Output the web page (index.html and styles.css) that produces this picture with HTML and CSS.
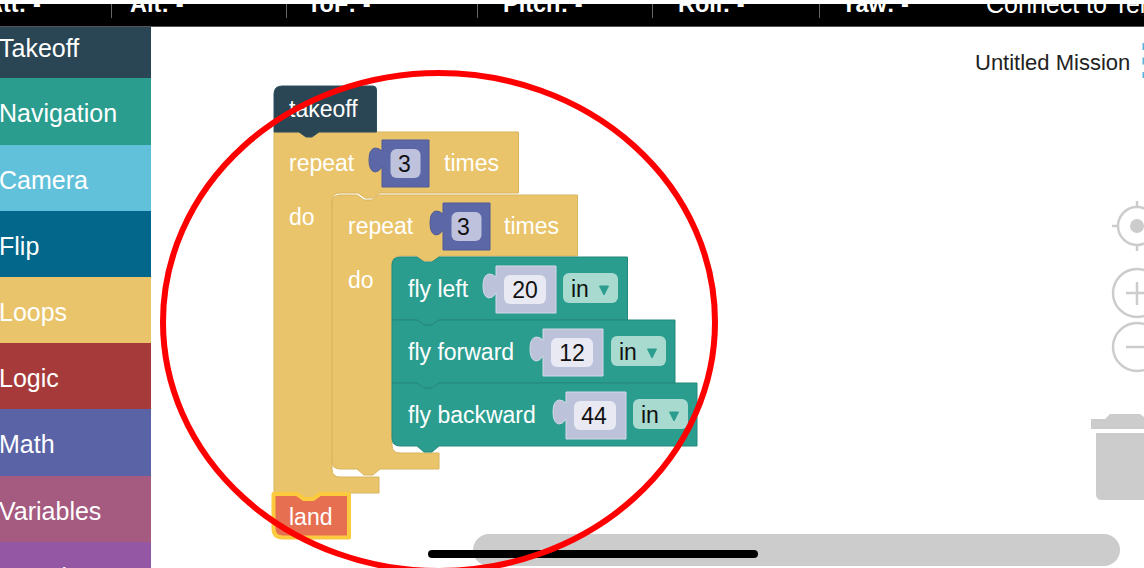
FILE: index.html
```html
<!DOCTYPE html>
<html>
  <head lang="en">
    <meta charset="UTF-8" />
    <title>Untitled Mission</title>
    <link rel="stylesheet" href="styles.css">
  </head>

  <body>
    <div class="topbar">
      <div class="stat stat-att">Att: -</div>
      <div class="stat stat-alt">Alt: -</div>
      <div class="stat stat-tof">ToF: -</div>
      <div class="stat stat-pitch">Pitch: -</div>
      <div class="stat stat-roll">Roll: -</div>
      <div class="stat stat-yaw">Yaw: -</div>
      <div class="connect">Connect to Tello</div>
    </div>

    <div class="main">
      <ul class="toolbox">
        <li class="cat cat-takeoff">Takeoff</li>
        <li class="cat cat-nav">Navigation</li>
        <li class="cat cat-camera">Camera</li>
        <li class="cat cat-flip">Flip</li>
        <li class="cat cat-loops">Loops</li>
        <li class="cat cat-logic">Logic</li>
        <li class="cat cat-math">Math</li>
        <li class="cat cat-vars">Variables</li>
        <li class="cat cat-funcs">Functions</li>
      </ul>

      <div class="workspace">
        <!-- viewBox is in page coordinates -->
        <svg class="canvas" viewBox="151 27 993 541" width="993" height="541">
          <defs>
            <path id="num-sm" d="M0 0h47v47h-47v-20q-3 5 -7 5q-6 -1 -6 -12q0 -11 6 -12q4 0 7 3z" />
            <path id="num-lg" d="M0 0h60v47h-60v-20q-3 5 -7 5q-6 -1 -6 -12q0 -11 6 -12q4 0 7 3z" />
            <g id="unit">
              <rect class="dropdown" width="55" height="30" rx="6" />
              <text class="block-text dark" x="8" y="24">in</text>
              <path class="arrow" d="M36.500 13h9l-4.500 9z" />
            </g>
          </defs>

          <!-- outer repeat -->
          <path class="block loops" d="M274 132H518.500V193H380l-7 5h-8l-7 -5H340Q332 193 332 201V469Q332 477 340 477H379V493H320l-7 5h-9l-7 -5H274Z" />
          <text class="block-text" x="289" y="171">repeat</text>
          <text class="block-text" x="444" y="171">times</text>
          <text class="block-text" x="289" y="225">do</text>
          <g transform="translate(382 140)">
            <use href="#num-sm" class="num-blue" />
            <rect class="field-blue" x="8.500" y="9" width="30" height="29" rx="6" />
            <text class="block-text dark mid" x="22.500" y="32">3</text>
          </g>

          <!-- takeoff -->
          <path class="block takeoff" d="M274 132V94Q274 86 282 86H373Q376.500 86 376.500 90V132H319l-7 5h-6l-7 -5Z" />
          <text class="block-text" x="289" y="117">takeoff</text>

          <!-- inner repeat -->
          <path class="block loops" d="M332 203Q332 195 340 195H357l7 5h8l7 -5H577.500V256H440l-7 5h-9l-7 -5H400Q392 256 392 264V445Q392 453 400 453H439V469H380l-7 6h-9l-7 -6H340Q332 469 332 461Z" />
          <text class="block-text" x="348" y="234">repeat</text>
          <text class="block-text" x="504" y="234">times</text>
          <text class="block-text" x="348" y="288">do</text>
          <g transform="translate(443 203)">
            <use href="#num-sm" class="num-blue" />
            <rect class="field-blue" x="8.500" y="9" width="30" height="29" rx="6" />
            <text class="block-text dark mid" x="20.500" y="32">3</text>
          </g>

          <!-- fly blocks -->
          <path class="block nav" d="M392 265Q392 257 400 257H417l7 5h8l7 -5H627.500V320H439l-7 5h-8l-7 -5H392Z" />
          <text class="block-text" x="408" y="297">fly left</text>
          <g transform="translate(496 266)">
            <use href="#num-lg" class="num-light" />
            <rect class="field-light" x="8" y="9" width="42" height="29" rx="6" />
            <text class="block-text dark mid" x="29" y="32">20</text>
          </g>
          <use href="#unit" x="563" y="273" />

          <path class="block nav" d="M392 320H417l7 5h8l7 -5H675V383H439l-7 5h-8l-7 -5H392Z" />
          <text class="block-text" x="408" y="360">fly forward</text>
          <g transform="translate(543 329)">
            <use href="#num-lg" class="num-light" />
            <rect class="field-light" x="8" y="9" width="42" height="29" rx="6" />
            <text class="block-text dark mid" x="29" y="32">12</text>
          </g>
          <use href="#unit" x="611" y="336" />

          <path class="block nav" d="M392 383H417l7 5h8l7 -5H697V446H439l-7 6h-8l-7 -6H400Q392 446 392 438Z" />
          <text class="block-text" x="408" y="423">fly backward</text>
          <g transform="translate(566 392)">
            <use href="#num-lg" class="num-light" />
            <rect class="field-light" x="8" y="9" width="42" height="29" rx="6" />
            <text class="block-text dark mid" x="28" y="32">44</text>
          </g>
          <use href="#unit" x="633" y="399" />

          <!-- land, selected -->
          <path class="land" d="M273.500 494H297l7 5h9l7 -5H349V537.500H283Q273.500 537.500 273.500 528Z" />
          <text class="block-text" x="289" y="525">land</text>

          <!-- title -->
          <text class="mission" x="975" y="70">Untitled Mission</text>
          <line class="title-edge" x1="1143.500" y1="43" x2="1143.500" y2="78" />

          <!-- controls -->
          <g class="ctl">
            <circle cx="1137" cy="226" r="19" />
            <path d="M1112 226h6M1137 201v6M1137 245v6" />
            <circle class="ctl-fill" cx="1137" cy="226" r="7" />
            <circle cx="1137" cy="293" r="24" />
            <path d="M1126 293h22M1137 282v23" />
            <circle cx="1137" cy="347" r="24" />
            <path d="M1126 347h22" />
          </g>
          <path class="ctl-fill" d="M1091 419H1105L1110 414H1140L1144 417V429H1091Z" />
          <path class="ctl-fill" d="M1096 433H1144V500H1102Q1096 500 1096 494Z" />

          <rect class="ctl-fill" x="473" y="534" width="647" height="32" rx="16" />
        </svg>
      </div>
    </div>

    <div class="home-bar"></div>

    <svg class="annotation" viewBox="0 0 1144 568" width="1144" height="568">
      <ellipse cx="439" cy="322" rx="276" ry="249" />
    </svg>
  </body>
</html>
```

FILE: styles.css
```css
html,
body,
ul,
li {
  margin: 0;
  padding: 0;
}

ul {
  list-style-type: none;
}

html,
body {
  height: 100%;
  overflow: hidden;
}

body {
  position: relative;
  display: flex;
  flex-direction: column;
  padding-top: 4px;
  box-sizing: border-box;
  background: #fff;
  font-family: "Liberation Sans", Arial, sans-serif;
}

.topbar {
  display: flex;
  flex: none;
  align-items: flex-start;
  height: 23px;
  box-sizing: border-box;
  overflow: hidden;
  background: #000;
  border-bottom: 1px solid #555;
  color: #fff;
  font-size: 23.500px;
  line-height: 0;
}

.stat {
  flex: none;
  box-sizing: border-box;
  height: 14px;
  border-right: 1px solid #666;
  font-weight: 700;
  white-space: nowrap;
}

.stat-att {
  width: 126px;
  margin-left: -14px;
}
.stat-alt {
  width: 175px;
  padding-left: 18px;
}
.stat-tof {
  width: 191px;
  padding-left: 20px;
}
.stat-pitch {
  width: 175px;
  padding-left: 25px;
}
.stat-roll {
  width: 167px;
  padding-left: 25px;
}
.stat-yaw {
  width: 166px;
  padding-left: 21px;
  border-right: 0;
}

.connect {
  flex: none;
  font-size: 25px;
  white-space: nowrap;
}

.main {
  display: flex;
  flex: 1;
  min-height: 0;
  overflow: hidden;
}

.toolbox {
  flex: none;
  width: 151px;
  color: #fff;
  font-size: 25px;
  text-indent: -1px;
}

.cat {
  display: flex;
  align-items: center;
  height: 66.200px;
  box-sizing: border-box;
  padding-top: 5px;
}

.cat-takeoff {
  height: 51.400px;
  padding-top: 0;
  padding-bottom: 9px;
  background: #2a4655;
}
.cat-nav {
  background: #2a9d8f;
}
.cat-camera {
  background: #62c1da;
}
.cat-flip {
  background: #03678c;
}
.cat-loops {
  background: #e9c46a;
}
.cat-logic {
  background: #a63a3a;
}
.cat-math {
  background: #5a63a6;
}
.cat-vars {
  background: #a55a80;
}
.cat-funcs {
  background: #9457a3;
}

.workspace {
  flex: 1;
  min-width: 0;
}

.canvas {
  display: block;
}

.block {
  stroke-width: 1;
}
.loops {
  fill: #e9c46a;
  stroke: #d8b45c;
}
.takeoff {
  fill: #2a4655;
  stroke: #2f4f5e;
}
.nav {
  fill: #2a9d8f;
  stroke: #25897d;
}

.block-text {
  fill: #fff;
  font-size: 23px;
}
.dark {
  fill: #111;
}
.mid {
  text-anchor: middle;
}

.num-blue {
  fill: #5b67a6;
  stroke: #4f5b98;
}
.field-blue {
  fill: #bec2dd;
}
.num-light {
  fill: #bcc2d9;
  stroke: #d6d9e8;
}
.field-light {
  fill: #e8e9f3;
}

.dropdown {
  fill: #a8dad0;
}
.arrow {
  fill: #2a9d8f;
  stroke: #2a9d8f;
  stroke-linejoin: round;
}

.land {
  fill: #e76f51;
  stroke: #fcca3f;
  stroke-width: 4;
  stroke-linejoin: round;
}

.mission {
  fill: #222;
  font-size: 22px;
}
.title-edge {
  stroke: #5bb0dc;
  stroke-width: 2;
  stroke-dasharray: 7 7.500;
}

.ctl circle,
.ctl path {
  fill: none;
  stroke: #ccc;
  stroke-width: 2.500;
}
.ctl .ctl-fill,
.ctl-fill {
  fill: #ccc;
  stroke: none;
}

.home-bar {
  position: absolute;
  left: 428px;
  top: 550px;
  width: 330px;
  height: 8px;
  border-radius: 4px;
  background: #000;
}

.annotation {
  position: absolute;
  left: 0;
  top: 0;
  pointer-events: none;
}
.annotation ellipse {
  fill: none;
  stroke: #f00;
  stroke-width: 6;
}
```
